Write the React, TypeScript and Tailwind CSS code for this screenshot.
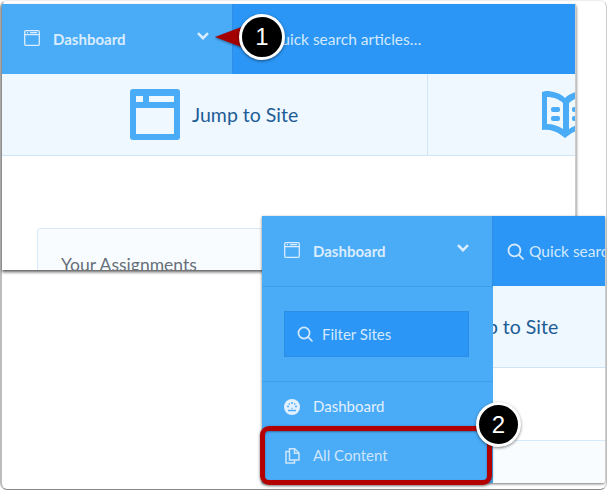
function BrowserIcon({ className }: { className?: string }) {
  return (
    <svg viewBox="0 0 16 16" className={className} fill="none" stroke="currentColor" strokeWidth="1.3">
      <rect x="0.7" y="0.7" width="14.6" height="14.6" rx="1" />
      <path d="M0.7 4.6h14.6" />
      <path d="M3 2.7h1M6 2.7h7" />
    </svg>
  );
}

function SearchIcon({ className }: { className?: string }) {
  return (
    <svg viewBox="0 0 16 16" className={className} fill="none" stroke="currentColor" strokeWidth="1.7" strokeLinecap="round">
      <circle cx="7" cy="7" r="5.6" />
      <path d="M11.2 11.2l3.8 3.8" />
    </svg>
  );
}

function Chevron() {
  return (
    <svg viewBox="0 0 12 8" className="-mt-[6px] h-[8px] w-[12px] text-[#d9edff]" fill="none" stroke="currentColor" strokeWidth="2.6">
      <path d="M1 1.2l5 5 5-5" />
    </svg>
  );
}

function BigBrowser() {
  return (
    <svg viewBox="0 0 50 51" className="h-[51px] w-[50px] shrink-0">
      <rect width="50" height="51" rx="3" fill="#4aabf7" />
      <rect x="6" y="7" width="7" height="6" fill="#eff7ff" />
      <rect x="19" y="7" width="25" height="6" fill="#eff7ff" />
      <rect x="6" y="19" width="38" height="26" fill="#eff7ff" />
    </svg>
  );
}

function BookIcon() {
  return (
    <svg viewBox="0 0 50 50" className="h-[50px] w-[50px] shrink-0">
      <path d="M1 2l4-1c7 0 14 2 19 7 5-5 12-7 19-7l5 1v38c-8-1-15 1-20 5l-4 3-4-3c-5-4-12-6-19-5z" fill="#4aabf7" />
      <path d="M6 7c6 0 12 2 16 6v26c-4-3-10-5-16-5zM44 7c-6 0-12 2-16 6v26c4-3 10-5 16-5z" fill="#eff7ff" />
      <rect x="10" y="17" width="9" height="5" rx="2" fill="#4aabf7" />
      <rect x="10" y="26" width="9" height="5" rx="2" fill="#4aabf7" />
      <rect x="31" y="17" width="9" height="5" rx="2" fill="#4aabf7" />
      <rect x="31" y="26" width="9" height="5" rx="2" fill="#4aabf7" />
    </svg>
  );
}

function GaugeIcon() {
  return (
    <svg viewBox="0 0 16 16" className="h-[16px] w-[16px] text-[#e3f1ff]">
      <circle cx="8" cy="8" r="8" fill="currentColor" />
      <path d="M3 7.5h2M11 7.5h2M8 3v2M4.8 4.6l1 1M11.2 4.6l-1 1M4 11.5h8M8 8.8v1" stroke="#4aabf7" strokeWidth="1.4" fill="none" />
    </svg>
  );
}

function CopyIcon() {
  return (
    <svg viewBox="0 0 15 16" className="h-[16px] w-[15px] text-[#cfe6fb]" fill="none" stroke="currentColor" strokeWidth="1.5">
      <path d="M4.5 3.5H1v11.6h8.5V11.8" />
      <path d="M4.5 0.8h5.2L14 5v7H4.5z" />
      <path d="M9.5 0.8v4.4H14" />
    </svg>
  );
}

function AppFrame() {
  return (
    <div className="flex w-[575px] flex-col">
      <div className="flex h-[70px] shrink-0 bg-[#2b96f5]">
        <div className="flex w-[231px] shrink-0 items-center border-r border-[#2f8fe6] bg-[#4aabf7] pr-[23px] pl-[22px]">
          <BrowserIcon className="-mt-[2px] h-[16px] w-[16px] text-[#d9edff]" />
          <span className="ml-[13px] flex-1 text-[15px] font-bold text-[#d9edff]">Dashboard</span>
          <Chevron />
        </div>
        <div className="flex flex-1 items-center pl-[14px] text-[#d3e9fd]">
          <SearchIcon className="h-[17px] w-[17px]" />
          <span className="mt-[2px] ml-[5px] text-[15.5px]">Quick search articles…</span>
        </div>
      </div>
      <div className="flex h-[82px] shrink-0 border-b border-[#cfe4f5] bg-[#eff7ff]">
        <div className="flex w-[426px] shrink-0 items-center border-r border-[#cfe4f5] pl-[128px]">
          <BigBrowser />
          <span className="ml-[12px] text-[19.5px] text-[#1c5d96]">Jump to Site</span>
        </div>
        <div className="flex flex-1 items-center pl-[113px]">
          <BookIcon />
        </div>
      </div>
      <div className="pt-[72px] pl-[35px]">
        <div className="h-[200px] rounded-tl-[3px] border border-[#d6eafb] bg-[#f9fcff] pt-[23px] pl-[23px] text-[17.5px] text-[#66707a]">
          Your Assignments
        </div>
      </div>
    </div>
  );
}

function Badge({ n, className }: { n: string; className: string }) {
  return (
    <div className={`absolute flex items-center justify-center rounded-full border-[3px] border-white bg-black font-['Liberation_Sans',sans-serif] text-[24px] text-white shadow-[0_1px_3px_rgba(0,0,0,0.5)] ${className}`}>
      {n}
    </div>
  );
}

export default function App() {
  return (
    <div className="relative h-[492px] w-[607px] overflow-hidden bg-white font-['Lato','Noto_Sans',sans-serif]">
      {/* outer screenshot edge */}
      <div className="absolute top-0 left-0 h-[490px] w-[607px] rounded-[7px] border border-t-[#eeeeee] border-r-[#cccccc] border-b-[#8a8a8a] border-l-[#bdbdbd] border-l-2" />

      <div className="absolute top-[4px] left-[2px] h-[266px] w-[574px] overflow-hidden border-r border-[#cccccc] bg-white shadow-[0_2px_3px_rgba(0,0,0,0.65)]">
        <AppFrame />
      </div>

      {/* callout arrow */}
      <svg viewBox="0 0 30 24" className="absolute top-[25px] left-[214px] h-[24px] w-[30px] drop-shadow-[0_1px_1px_rgba(0,0,0,0.4)]">
        <polygon points="1,12 30,1 30,23" fill="#a40000" />
      </svg>
      <Badge n="1" className="top-[14px] left-[239px] h-[46px] w-[46px]" />

      <div className="absolute top-[216px] left-[262px] h-[267px] w-[343px] overflow-hidden rounded-br-[3px] bg-white shadow-[0_1px_3px_rgba(0,0,0,0.55)]">
        <AppFrame />
        <div className="absolute top-[70px] left-0 h-[197px] w-[231px] border-t border-[#3b9ff0] bg-[#4aabf7]">
          <div className="flex h-[95px] items-center border-b border-[#3b9ff0] px-[22px]">
            <div className="flex h-[46px] w-[185px] items-center border border-[#2a8de6] bg-[#2b96f5] pl-[12px] text-[#d3e9fd]">
              <SearchIcon className="h-[16px] w-[16px]" />
              <span className="ml-[9px] text-[15px]">Filter Sites</span>
            </div>
          </div>
          <div className="flex h-[49px] items-center pl-[22px] text-[#e3f1ff]">
            <GaugeIcon />
            <span className="ml-[13px] text-[15px]">Dashboard</span>
          </div>
          <div className="flex h-[49px] items-center pl-[23px] text-[#cfe6fb]">
            <CopyIcon />
            <span className="ml-[13px] text-[15px]">All Content</span>
          </div>
        </div>
      </div>

      {/* highlight around All Content */}
      <div className="absolute top-[426px] left-[260px] h-[59px] w-[232px] rounded-[9px] border-[5px] border-[#b30000] shadow-[0_1px_3px_rgba(0,0,0,0.5),inset_0_1px_2px_rgba(0,0,0,0.35)]" />
      <Badge n="2" className="top-[402px] left-[476px] h-[45px] w-[45px]" />
    </div>
  );
}
